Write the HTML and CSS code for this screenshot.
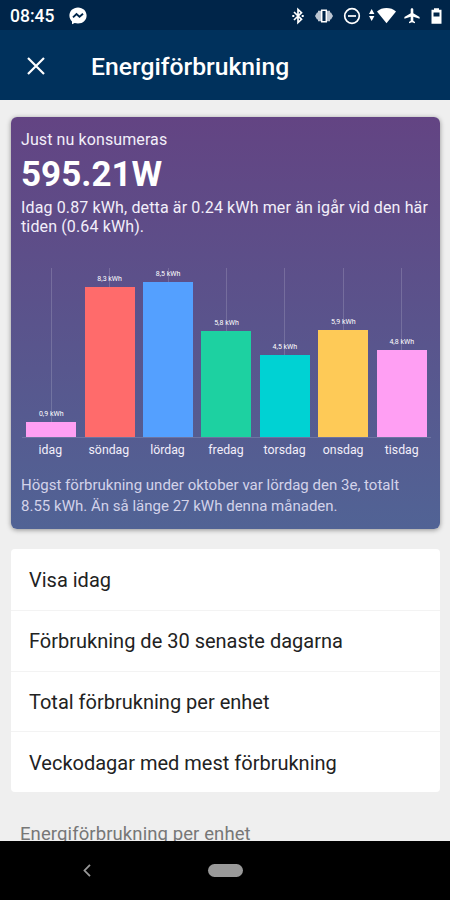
FILE: index.html
```html
<!DOCTYPE html>
<html lang="sv">
<head>
  <meta charset="UTF-8" />
  <meta name="viewport" content="width=device-width, initial-scale=1" />
  <title>Energiförbrukning</title>
  <link rel="stylesheet" href="styles.css">
</head>

<body>
  <div class="statusbar">
    <span class="clock">08:45</span>
    <svg class="messenger" width="18" height="18" viewBox="0 0 18 18">
      <path fill="#fff" d="M9 .4C4 .4.4 4 .4 8.500c0 2.400 1 4.500 2.600 5.900v2.800l2.700-1.200c1 .3 2.100.5 3.300.5 5 0 8.600-3.500 8.600-8S14 .4 9 .4z"/>
      <path fill="none" stroke="#002549" stroke-width="1.900" d="M4 10.400l3.500-3.300 3 2.600 3.500-3"/>
    </svg>
    <div class="status-icons">
      <svg class="bluetooth" width="12" height="18" viewBox="0 0 12 18" fill="none" stroke="#fff" stroke-width="1.700">
        <path d="M2 5l7.500 7.300L6 15.600V2.400l3.500 3.300L2 13"/>
        <path stroke-width="2" d="M.3 9h2M9.700 9h2"/>
      </svg>
      <svg class="vibrate" width="18" height="18" viewBox="0 0 18 18">
        <path fill="#bcc6d2" d="M0 9l2-3.500h1V3.800h12v1.700h1L18 9l-2 3.500h-1v1.700H3v-1.700H2z"/>
        <path fill="#002549" stroke="#fff" stroke-width="1.500" d="M6.700 3.300h4.600v11.400H6.700z"/>
      </svg>
      <svg width="18" height="18" viewBox="0 0 18 18" fill="none" stroke="#fff" stroke-width="1.700">
        <circle cx="9" cy="9" r="7.300"/>
        <path d="M5 9h8"/>
      </svg>
      <svg width="27" height="18" viewBox="0 0 27 18" fill="#fff">
        <path d="M0 7l2.700-5 2.700 5zM0 9h5.400l-2.700 5z"/>
        <path d="M8 4.500C13-.1 22-.1 27 4.500L17.500 16.200z"/>
      </svg>
      <svg class="airplane" width="16" height="18" viewBox="0 0 16 18" fill="#fff">
        <path d="M15.600 11.700v-1.600L9.300 6.200V2.500C9.300 1.700 8.700 1.200 8 1.200s-1.300.5-1.300 1.300v3.700L.4 10.100v1.600l6.300-1.900v3.900L5 15v1.200l3-.9 3 .9V15l-1.700-1.300V9.800z"/>
      </svg>
      <svg width="11" height="18" viewBox="0 0 11 18">
        <path fill="#fff" d="M3 1.200h5v1.600h2.500v13.900H.5V2.800H3z"/>
        <path fill="#002549" d="M2.500 5.500h6v4h-6z"/>
      </svg>
    </div>
  </div>

  <header class="appbar">
    <svg width="18" height="18" viewBox="0 0 18 18" fill="none" stroke="#fff" stroke-width="2.200">
      <path d="M1 1l16 16M17 1L1 17"/>
    </svg>
    <h1>Energiförbrukning</h1>
  </header>

  <main>
    <section class="card">
      <div class="label">Just nu konsumeras</div>
      <div class="power">595.21W</div>
      <p class="today">Idag 0.87 kWh, detta är 0.24 kWh mer än igår vid den här tiden (0.64 kWh).</p>

      <div class="chart">
        <div class="col"><span class="value">0,9 kWh</span><div class="bar pink" style="height: 15px"></div></div>
        <div class="col"><span class="value">8,3 kWh</span><div class="bar red" style="height: 150px"></div></div>
        <div class="col"><span class="value">8,5 kWh</span><div class="bar blue" style="height: 155px"></div></div>
        <div class="col"><span class="value">5,8 kWh</span><div class="bar green" style="height: 106px"></div></div>
        <div class="col"><span class="value">4,5 kWh</span><div class="bar cyan" style="height: 82px"></div></div>
        <div class="col"><span class="value">5,9 kWh</span><div class="bar yellow" style="height: 107px"></div></div>
        <div class="col"><span class="value">4,8 kWh</span><div class="bar pink" style="height: 87px"></div></div>
      </div>
      <div class="days">
        <span>idag</span>
        <span>söndag</span>
        <span>lördag</span>
        <span>fredag</span>
        <span>torsdag</span>
        <span>onsdag</span>
        <span>tisdag</span>
      </div>

      <p class="month">Högst förbrukning under oktober var lördag den 3e, totalt 8.55 kWh. Än så länge 27 kWh denna månaden.</p>
    </section>

    <ul class="menu">
      <li>Visa idag</li>
      <li>Förbrukning de 30 senaste dagarna</li>
      <li>Total förbrukning per enhet</li>
      <li>Veckodagar med mest förbrukning</li>
    </ul>

    <h2>Energiförbrukning per enhet</h2>
  </main>

  <nav class="navbar">
    <svg width="8" height="13" viewBox="0 0 8 13" fill="none" stroke="#999" stroke-width="1.800">
      <path d="M7 .8L1.500 6.500 7 12.200"/>
    </svg>
    <span class="home"></span>
  </nav>
</body>
</html>
```
FILE: styles.css
```css
* {
  box-sizing: border-box;
}

body {
  margin: 0;
  height: 900px;
  display: flex;
  flex-direction: column;
  overflow: hidden;
  font-family: Roboto, sans-serif;
  background: #efefef;
  color: #222;
}

svg {
  display: block;
  flex: none;
}

.statusbar {
  height: 30px;
  flex: none;
  display: flex;
  align-items: center;
  padding: 1px 8px 0 10px;
  background: #002549;
  color: #fff;
}

.clock {
  width: 59px;
  font-size: 17.500px;
  font-weight: 500;
}

.status-icons {
  margin-left: auto;
  display: flex;
  align-items: center;
  gap: 8px;
}

.bluetooth,
.airplane {
  margin-right: 3px;
}

.vibrate {
  margin-right: 2px;
}

.appbar {
  height: 70px;
  flex: none;
  display: flex;
  align-items: center;
  gap: 46px;
  padding: 1px 27px 0;
  background: #00315c;
  color: #fff;
}

.appbar h1 {
  margin: 2px 0 0;
  font-size: 24.700px;
  font-weight: 500;
}

main {
  flex: 1;
  min-height: 0;
  overflow: hidden;
  padding: 17px 10px 0 11px;
}

.card {
  height: 412px;
  padding: 13px 9px 0 10px;
  border-radius: 6px;
  background: linear-gradient(#634483, #516395);
  box-shadow: 0 1px 5px rgba(0, 0, 0, 0.4);
  color: #f3effa;
}

.label {
  font-size: 16px;
  line-height: 19px;
  letter-spacing: 0.100px;
}

.power {
  margin-top: 5px;
  font-size: 35px;
  line-height: 42px;
  font-weight: 700;
  color: #fff;
}

.today {
  margin: 2px 0 0;
  font-size: 16px;
  line-height: 19px;
  letter-spacing: 0.130px;
}

.chart {
  height: 170px;
  margin: 32px 0 0 1px;
  display: flex;
  border-bottom: 1px solid rgba(255, 255, 255, 0.15);
}

.col {
  flex: 1;
  display: flex;
  flex-direction: column;
  align-items: center;
  justify-content: flex-end;
  background: linear-gradient(rgba(255, 255, 255, 0.16), rgba(255, 255, 255, 0.16)) center / 1px 100% no-repeat;
}

.value {
  margin-bottom: 4px;
  font-size: 7px;
  line-height: 8px;
  color: #fff;
}

.bar {
  width: 50px;
}

.pink { background: #ff9ff3; }
.red { background: #ff6b6b; }
.blue { background: #54a0ff; }
.green { background: #1dd1a1; }
.cyan { background: #00d2d3; }
.yellow { background: #feca57; }

.days {
  display: flex;
  margin: 4px 0 0;
  font-size: 12.300px;
  line-height: 16px;
}

.days span {
  flex: 1;
  text-align: center;
}

.month {
  margin: 17px 0 0;
  font-size: 15px;
  line-height: 21px;
  letter-spacing: 0.010px;
  color: #d3d3ea;
}

.menu {
  margin: 20px 0 0;
  padding: 0;
  list-style: none;
  border-radius: 4px;
  background: #fff;
}

.menu li {
  height: 60.750px;
  padding: 1px 18px 0;
  display: flex;
  align-items: center;
  font-size: 20px;
}

.menu li + li {
  border-top: 1px solid #f3f3f3;
}

h2 {
  margin: 31px 9px 0;
  font-size: 18.500px;
  line-height: 22px;
  font-weight: 400;
  letter-spacing: 0.100px;
  color: #777;
}

.navbar {
  height: 59px;
  flex: none;
  display: flex;
  align-items: center;
  gap: 117px;
  padding-left: 83px;
  background: #000;
}

.home {
  width: 35px;
  height: 13px;
  border-radius: 7px;
  background: #999;
}
```
